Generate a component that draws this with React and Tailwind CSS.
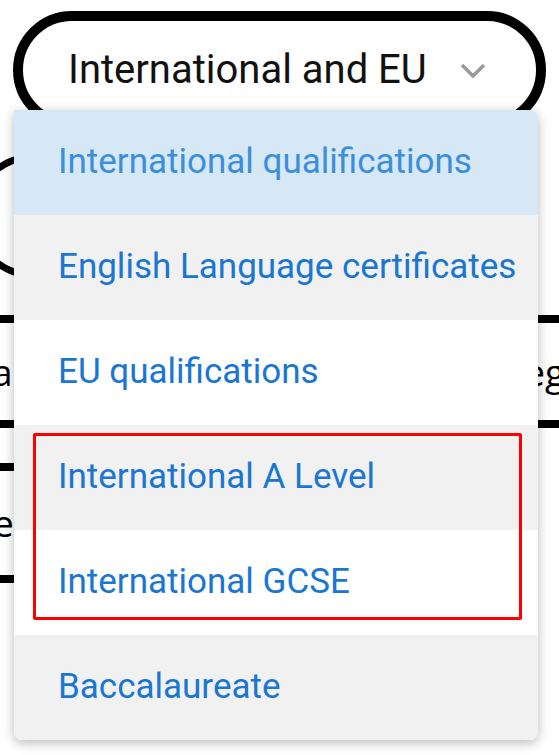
import React from 'react';

const options = [
  { label: 'International qualifications', bg: 'bg-[#d6e8f6]', text: 'text-[#3a8fdd]' },
  { label: 'English Language certificates', bg: 'bg-[#f1f1f1]', text: 'text-[#1976d2]' },
  { label: 'EU qualifications', bg: 'bg-white', text: 'text-[#1976d2]' },
  { label: 'International A Level', bg: 'bg-[#f1f1f1]', text: 'text-[#1976d2]' },
  { label: 'International GCSE', bg: 'bg-white', text: 'text-[#1976d2]' },
  { label: 'Baccalaureate', bg: 'bg-[#f1f1f1]', text: 'text-[#1976d2]' },
];

export default function App() {
  return (
    <div className="relative w-[559px] h-[755px] overflow-hidden bg-white font-['Roboto',sans-serif]">
      {/* select trigger */}
      <div className="mx-[13px] mt-[11px] h-[118px] rounded-full border-[10px] border-black flex items-center justify-between pl-[45px] pr-[50px]">
        <span className="text-[40px] text-[#111]">International and EU</span>
        <svg width="26" height="16" viewBox="0 0 26 16" className="mt-[2px]">
          <path d="M2 2 L13 13 L24 2" fill="none" stroke="#9a9a9a" strokeWidth="3.5" />
        </svg>
      </div>

      {/* page content behind the menu */}
      <div className="mt-[24px] -ml-[30px] w-[130px] h-[126px] rounded-[50%] border-[7px] border-black" />

      <div className="mt-[36px] font-['Open_Sans',sans-serif] text-[37px] text-black">
        <div className="h-[8px] bg-black" />
        <div className="h-[97px] flex items-center justify-between">
          <span className="-ml-[8px]">a</span>
          <span className="mr-[-6px]">eg</span>
        </div>
        <div className="h-[8px] bg-black" />
        <div className="h-[35px]" />
        <div className="h-[8px] w-[300px] bg-black" />
        <div className="h-[104px] flex items-center">
          <span className="-ml-[7px]">e</span>
        </div>
        <div className="h-[8px] w-[300px] bg-black" />
      </div>

      {/* dropdown menu */}
      <div className="absolute left-[14px] top-[110px] w-[524px] rounded-b-lg rounded-tr-lg overflow-hidden shadow-[0_3px_12px_rgba(0,0,0,0.28)]">
        {options.map((o) => (
          <div key={o.label} className={`h-[105px] flex items-center pl-[44px] ${o.bg}`}>
            <span className={`text-[35px] ${o.text}`}>{o.label}</span>
          </div>
        ))}
      </div>

      {/* highlight box */}
      <div className="absolute left-[33px] top-[433px] w-[489px] h-[187px] border-[3px] border-[#ff0000] rounded-[2px]" />
    </div>
  );
}
